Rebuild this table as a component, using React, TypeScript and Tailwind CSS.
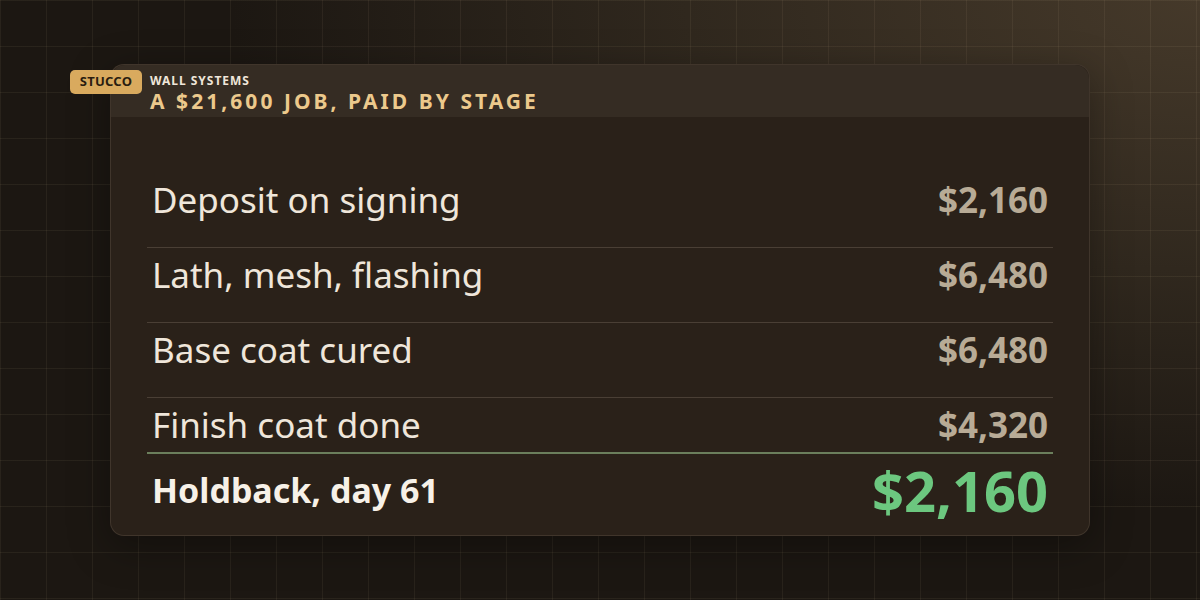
export default function App() {
  const stages = [
    { label: "Deposit on signing", amount: "$2,160" },
    { label: "Lath, mesh, flashing", amount: "$6,480" },
    { label: "Base coat cured", amount: "$6,480" },
    { label: "Finish coat done", amount: "$4,320" },
  ]

  return (
    <div className="relative h-[600px] w-full overflow-hidden bg-[#1c1712] font-['Noto_Sans',sans-serif]">
      {/* warm glow + grid */}
      <div className="absolute inset-0 bg-[radial-gradient(ellipse_95%_100%_at_100%_0%,#45392a_0%,#30281e_45%,#1c1712_85%)]" />
      <div className="absolute inset-0 bg-[linear-gradient(to_right,rgba(255,226,180,0.06)_1px,transparent_1px),linear-gradient(to_bottom,rgba(255,226,180,0.06)_1px,transparent_1px)] bg-[size:46px_46px]" />

      <div className="relative flex justify-center pt-[64px]">
        <div className="w-[980px] rounded-[14px] border border-[#4a3f33]/70 bg-[#2a2119] shadow-[0_10px_40px_rgba(0,0,0,0.35)]">
          <div className="h-[52px] rounded-t-[14px] bg-[#352c23]">
            <div className="ml-[-41px] flex gap-2 pt-[5px]">
              <div className="flex h-[24px] w-[72px] items-center justify-center rounded-[5px] bg-[#d9aa5e] text-[13px] font-bold tracking-[0.02em] text-[#2a1d10]">
                STUCCO
              </div>
              <div className="flex flex-col pt-[4px]">
                <span className="text-[12px] leading-[14px] font-bold tracking-[0.08em] text-[#efe6da]">
                  WALL SYSTEMS
                </span>
                <span className="text-[21px] leading-[26px] font-bold tracking-[0.145em] text-[#ecc98c]">
                  A $21,600 JOB, PAID BY STAGE
                </span>
              </div>
            </div>
          </div>

          <div className="px-9 pt-[56px] pb-[9px]">
            {stages.map((s, i) => (
              <div
                key={i}
                className={`flex items-center justify-between px-[5px] ${
                  i < stages.length - 1
                    ? "border-b border-[#4a3f35] pb-5"
                    : "border-b-2 border-[#6b7f5c]"
                }`}
              >
                <span className="text-[35px] leading-[54px] font-normal text-[#efe6da]">{s.label}</span>
                <span className="text-[35px] leading-[54px] font-bold text-[#b8ab96]">{s.amount}</span>
              </div>
            ))}
            <div className="flex h-[72px] items-center justify-between px-[5px]">
              <span className="text-[34px] font-bold text-[#f7f1e8]">Holdback, day 61</span>
              <span className="text-[56px] leading-none font-bold text-[#6cc77f]">$2,160</span>
            </div>
          </div>
        </div>
      </div>
    </div>
  )
}
